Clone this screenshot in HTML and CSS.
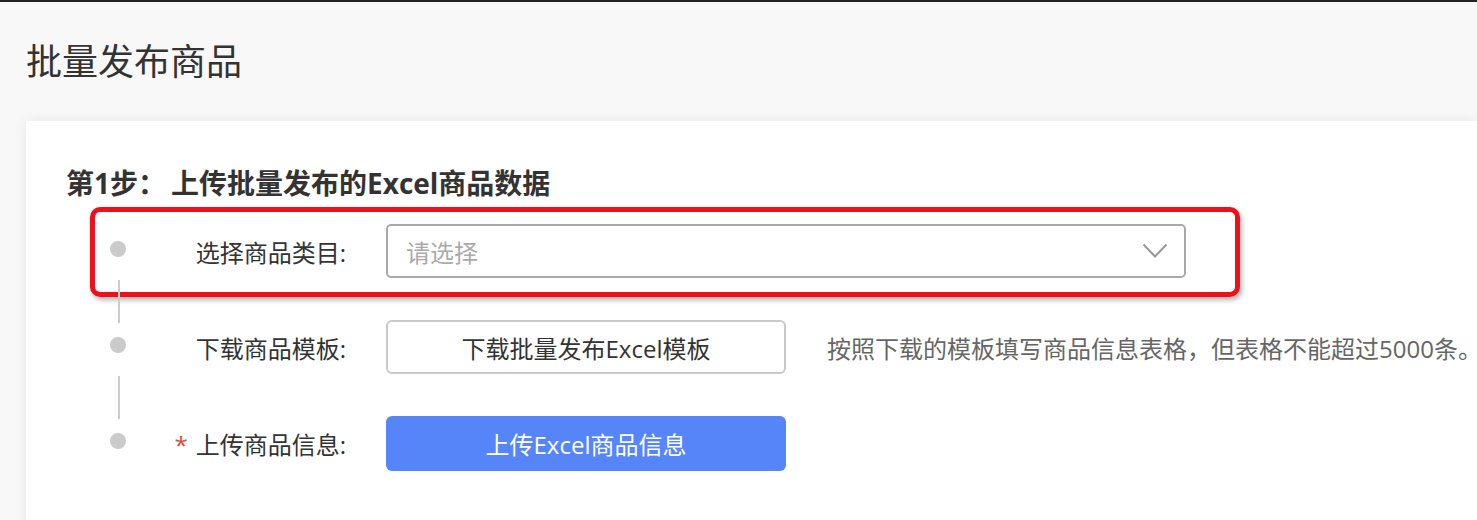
FILE: index.html
```html
<!DOCTYPE html>
<html lang="zh-CN">
<head>
<meta charset="utf-8">
<title>批量发布商品</title>
<link rel="stylesheet" href="styles.css">
</head>
<body>
<div class="page">
  <h1 class="page-title">批量发布商品</h1>
  <div class="card">
    <h2 class="step-title">第1步<span class="colon">：</span>上传批量发布的Excel商品数据</h2>
    <div class="steps">
      <div class="row">
        <div class="highlight"></div>
        <span class="dot"></span>
        <label class="label">选择商品类目:</label>
        <div class="select">
          <span class="placeholder">请选择</span>
          <svg class="chevron" width="26" height="16" viewBox="0 0 26 16"><path d="M1.5 1.5 L13 13.5 L24.5 1.5" fill="none" stroke="#999" stroke-width="2"/></svg>
        </div>
      </div>
      <div class="row">
        <span class="dot"></span>
        <label class="label">下载商品模板:</label>
        <button class="btn btn-default">下载批量发布Excel模板</button>
        <span class="hint">按照下载的模板填写商品信息表格，但表格不能超过5000条。</span>
      </div>
      <div class="row">
        <span class="dot last"></span>
        <label class="label"><span class="req">*</span>上传商品信息:</label>
        <button class="btn btn-primary">上传Excel商品信息</button>
      </div>
    </div>
  </div>
</div>
</body>
</html>
```
FILE: styles.css
```css
* { box-sizing: border-box; }
html, body { margin: 0; padding: 0; }
body {
  background: #f8f8f8;
  font-family: "Open Sans", "Noto Sans CJK SC", sans-serif;
  color: #333;
  overflow: hidden;
  height: 520px;
  border-top: 2px solid #222;
}
.page { padding-left: 26px; }
.page-title {
  margin: 0;
  padding-top: 35px;
  font-size: 36px;
  line-height: 50px;
  font-weight: 400;
  color: #333;
  letter-spacing: 0;
}
.card {
  margin-top: 34px;
  background: #fff;
  height: 420px;
  box-shadow: 0 0 12px rgba(0,0,0,0.07);
  padding: 42px 0 0 40px;
}
.step-title {
  margin: 0;
  font-size: 28px;
  line-height: 40px;
  font-weight: 700;
  color: #333;
}
.colon {
  display: inline-block;
  width: 33px;
}
.steps {
  margin-top: 21px;
  padding-left: 44px;
  display: flex;
  flex-direction: column;
  gap: 42px;
}
.row {
  position: relative;
  display: flex;
  align-items: center;
  height: 54px;
}
.dot {
  position: relative;
  width: 16px;
  height: 16px;
  border-radius: 50%;
  background: #cbcbcb;
  margin-top: -4px;
  flex: none;
}
.dot::after {
  content: "";
  position: absolute;
  left: 8px;
  top: 39px;
  width: 2px;
  height: 43px;
  background: #ccc;
}
.dot.last::after { display: none; }
.label {
  width: 220px;
  text-align: right;
  font-size: 24px;
  color: #333;
  flex: none;
}
.req {
  color: #e4462f;
  margin-right: 8px;
  font-size: 24px;
}
.select {
  margin-left: 40px;
  width: 800px;
  height: 54px;
  border: 2px solid #a9a9a9;
  border-radius: 5px;
  display: flex;
  align-items: center;
  justify-content: space-between;
  padding: 0 16px 0 18px;
  flex: none;
}
.placeholder { font-size: 24px; color: #aaa; }
.chevron { display: block; }
.btn {
  margin-left: 40px;
  width: 400px;
  height: 54px;
  border-radius: 6px;
  font-family: inherit;
  font-size: 24px;
  padding: 0;
  flex: none;
}
.btn-default {
  background: #fff;
  border: 2px solid #c9c9c9;
  color: #333;
}
.btn-primary {
  height: 55px;
  background: #5685fa;
  border: none;
  color: #fff;
}
.hint {
  margin-left: 41px;
  font-size: 24px;
  color: #666;
  white-space: nowrap;
  flex: none;
}
.highlight {
  position: absolute;
  left: -20px;
  top: -17px;
  width: 1150px;
  height: 90px;
  border: 5px solid #f0101c;
  border-radius: 10px;
  box-shadow: 2px 3px 5px rgba(0,0,0,0.3);
  pointer-events: none;
}
```
